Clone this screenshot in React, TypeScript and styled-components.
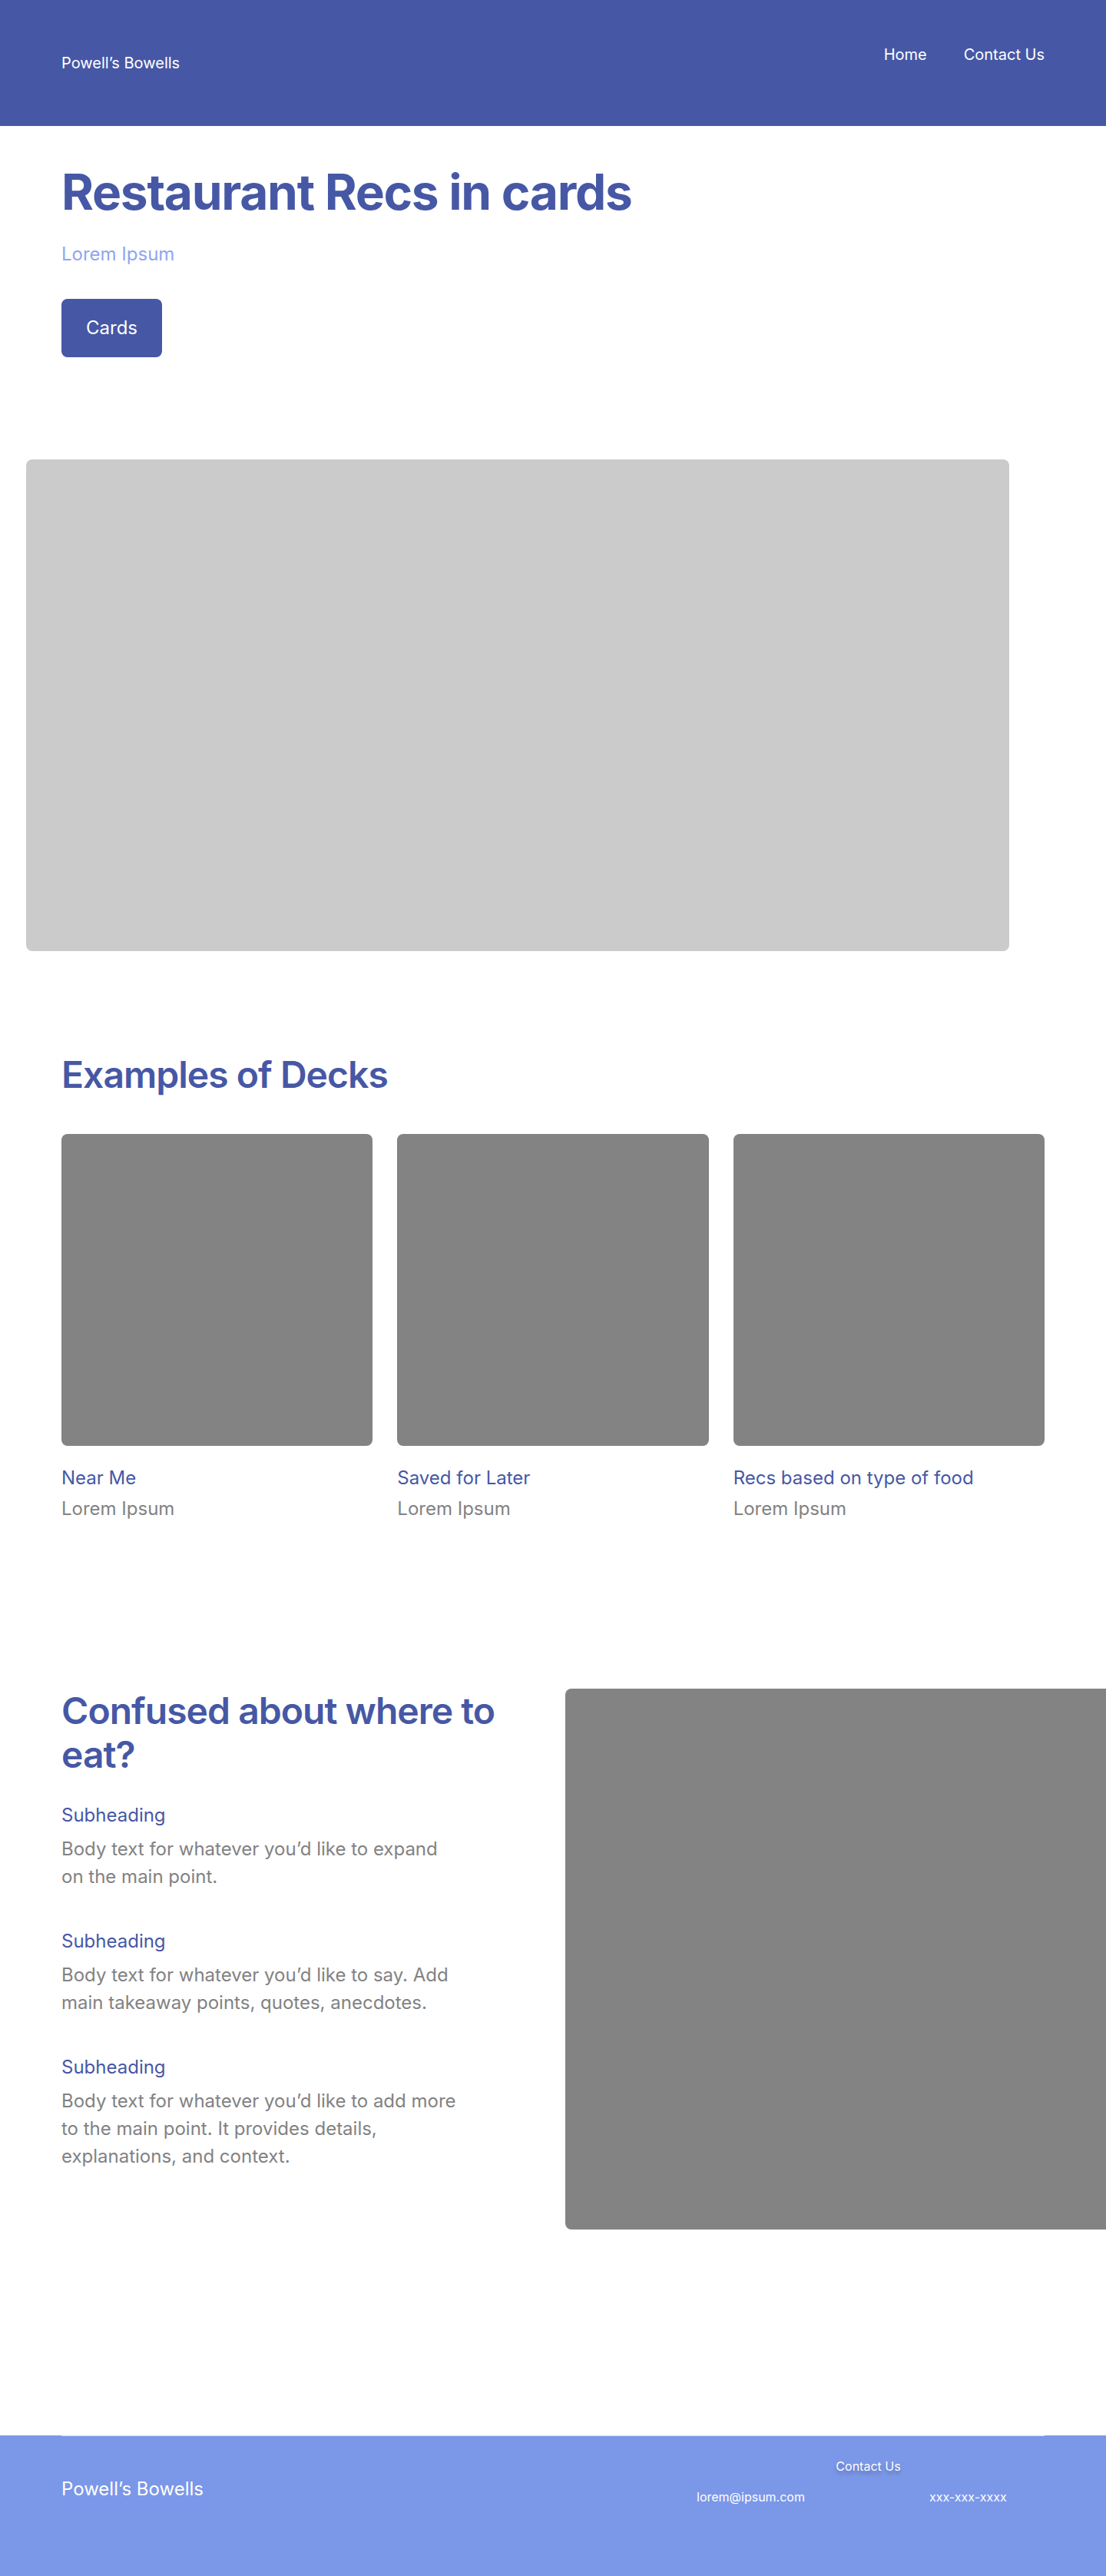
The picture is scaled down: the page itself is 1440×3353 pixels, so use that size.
import React from "react";
import styled, { createGlobalStyle } from "styled-components";

const GlobalStyle = createGlobalStyle`
  * { box-sizing: border-box; }
  html, body { margin: 0; padding: 0; background: #ffffff; }
  body {
    font-family: Inter, "Noto Sans", "Liberation Sans", sans-serif;
    -webkit-font-smoothing: antialiased;
  }
  h1, h2, h3, p { margin: 0; }
`;

const BRAND = "#4658a5";
const LIGHT = "#8fa6ef";
const GREY_TEXT = "#828282";

const Page = styled.div`
  width: 1440px;
  min-height: 3353px;
  display: flex;
  flex-direction: column;
  overflow: hidden;
`;

const Header = styled.header`
  height: 164px;
  background: ${BRAND};
  padding: 59px 80px 0;
  display: flex;
  justify-content: space-between;
  align-items: flex-start;
`;

const Logo = styled.div<{ $size: number; $offset: number }>`
  color: #ffffff;
  font-size: ${(p) => p.$size}px;
  line-height: ${(p) => (p.$size === 20 ? 24 : 36)}px;
  font-weight: 400;
  margin-top: ${(p) => p.$offset}px;
`;

const Nav = styled.nav`
  display: flex;
  gap: 48px;
`;

const NavLink = styled.a`
  color: #ffffff;
  font-size: 20px;
  line-height: 24px;
  font-weight: 400;
  text-decoration: none;
`;

const Hero = styled.section`
  padding: 48px 80px 0;
  display: flex;
  flex-direction: column;
  align-items: flex-start;
`;

const Title = styled.h1`
  color: ${BRAND};
  font-size: 64px;
  line-height: 76.8px;
  font-weight: 700;
  letter-spacing: -0.02em;
`;

const Lead = styled.p`
  margin-top: 24px !important;
  color: ${LIGHT};
  font-size: 24px;
  line-height: 36px;
  font-weight: 400;
`;

const Button = styled.button`
  margin-top: 40px;
  background: ${BRAND};
  color: #ffffff;
  border: none;
  border-radius: 8px;
  padding: 24px 32px;
  font-family: inherit;
  font-size: 24px;
  line-height: 28px;
  font-weight: 400;
  cursor: pointer;
`;

const HeroImage = styled.div`
  margin: 133px 0 0 34px;
  width: 1280px;
  height: 640px;
  background: #cbcbcb;
  border-radius: 8px;
`;

const Decks = styled.section`
  padding: 132px 80px 0;
  display: flex;
  flex-direction: column;
  gap: 49px;
`;

const SectionTitle = styled.h2`
  color: ${BRAND};
  font-size: 48px;
  line-height: 57.6px;
  font-weight: 600;
  letter-spacing: -0.02em;
`;

const CardGrid = styled.div`
  display: grid;
  grid-template-columns: repeat(3, 1fr);
  gap: 32px;
`;

const Card = styled.article`
  display: flex;
  flex-direction: column;
`;

const Placeholder = styled.div`
  aspect-ratio: 1 / 1;
  width: 100%;
  background: #838383;
  border-radius: 8px;
`;

const CardTitle = styled.h3`
  margin-top: 24px !important;
  color: ${BRAND};
  font-size: 24px;
  line-height: 36px;
  font-weight: 400;
`;

const CardText = styled.p`
  margin-top: 4px !important;
  color: ${GREY_TEXT};
  font-size: 24px;
  line-height: 36px;
  font-weight: 400;
`;

const Feature = styled.section`
  margin-top: 216px;
  padding-left: 80px;
  display: grid;
  grid-template-columns: 624px 720px;
  column-gap: 32px;
  align-items: start;
`;

const FeatureText = styled.div`
  display: flex;
  flex-direction: column;
`;

const Points = styled.div`
  margin-top: 32px;
  display: flex;
  flex-direction: column;
  gap: 48px;
`;

const Point = styled.div`
  display: flex;
  flex-direction: column;
  gap: 8px;
  max-width: 518px;
`;

const Subheading = styled.h3`
  color: ${BRAND};
  font-size: 24px;
  line-height: 36px;
  font-weight: 400;
`;

const Body = styled.p`
  color: ${GREY_TEXT};
  font-size: 24px;
  line-height: 36px;
  font-weight: 400;
`;

const FeatureImage = styled.div`
  width: 720px;
  height: 704px;
  background: #838383;
  border-radius: 8px;
`;

const Spacer = styled.div`
  flex: 1;
  min-height: 268px;
`;

const Footer = styled.footer`
  height: 183px;
  background: #7b97e8;
  display: flex;
  flex-direction: column;
`;

const Divider = styled.div`
  margin: 0 80px;
  height: 1px;
  background: #d9d9d9;
`;

const FooterInner = styled.div`
  padding: 27px 80px 0;
  display: flex;
  justify-content: space-between;
  align-items: flex-start;
`;

const Contact = styled.div`
  display: grid;
  grid-template-columns: 303px 144px;
  row-gap: 16px;
  margin-right: 6px;
`;

const ContactHead = styled.div`
  grid-column: 1 / span 2;
  text-align: center;
  color: #ffffff;
  font-size: 16px;
  line-height: 24px;
  font-weight: 400;
  text-shadow: 0 4px 4px rgba(0, 0, 0, 0.25);
`;

const ContactItem = styled.div`
  color: #ffffff;
  font-size: 16px;
  line-height: 24px;
  font-weight: 400;
`;

const decks = [
  { title: "Near Me", text: "Lorem Ipsum" },
  { title: "Saved for Later", text: "Lorem Ipsum" },
  { title: "Recs based on type of food", text: "Lorem Ipsum" },
];

const points = [
  "Body text for whatever you\u2019d like to expand on the main point.",
  "Body text for whatever you\u2019d like to say. Add main takeaway points, quotes, anecdotes.",
  "Body text for whatever you\u2019d like to add more to the main point. It provides details, explanations, and context.",
];

export default function App() {
  return (
    <>
      <GlobalStyle />
      <Page>
        <Header>
          <Logo $size={20} $offset={11}>Powell’s Bowells</Logo>
          <Nav>
            <NavLink href="#">Home</NavLink>
            <NavLink href="#">Contact Us</NavLink>
          </Nav>
        </Header>

        <Hero>
          <Title>Restaurant Recs in cards</Title>
          <Lead>Lorem Ipsum</Lead>
          <Button>Cards</Button>
        </Hero>

        <HeroImage />

        <Decks>
          <SectionTitle>Examples of Decks</SectionTitle>
          <CardGrid>
            {decks.map((d) => (
              <Card key={d.title}>
                <Placeholder />
                <CardTitle>{d.title}</CardTitle>
                <CardText>{d.text}</CardText>
              </Card>
            ))}
          </CardGrid>
        </Decks>

        <Feature>
          <FeatureText>
            <SectionTitle>Confused about where to eat?</SectionTitle>
            <Points>
              {points.map((p, i) => (
                <Point key={i}>
                  <Subheading>Subheading</Subheading>
                  <Body>{p}</Body>
                </Point>
              ))}
            </Points>
          </FeatureText>
          <FeatureImage />
        </Feature>

        <Spacer />

        <Footer>
          <Divider />
          <FooterInner>
            <Logo $size={24} $offset={24}>Powell’s Bowells</Logo>
            <Contact>
              <ContactHead>Contact Us</ContactHead>
              <ContactItem>lorem@ipsum.com</ContactItem>
              <ContactItem>xxx-xxx-xxxx</ContactItem>
            </Contact>
          </FooterInner>
        </Footer>
      </Page>
    </>
  );
}
